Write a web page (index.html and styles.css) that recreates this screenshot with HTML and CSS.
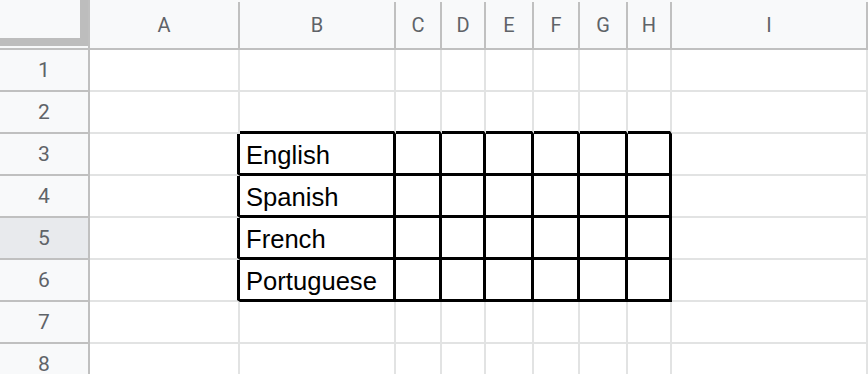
FILE: index.html
```html
<!DOCTYPE html>
<html lang="en">
<head>
    <meta charset="UTF-8">
    <title>Sheet</title>
    <link rel="stylesheet" href="styles.css">
</head>
<body>
    <div class="sheet">
        <!-- column headers -->
        <div class="corner"><div class="freeze-v"></div><div class="freeze-h"></div></div>
        <div class="col-head">A</div>
        <div class="col-head">B</div>
        <div class="col-head">C</div>
        <div class="col-head">D</div>
        <div class="col-head">E</div>
        <div class="col-head">F</div>
        <div class="col-head">G</div>
        <div class="col-head">H</div>
        <div class="col-head">I</div>

        <!-- row 1 -->
        <div class="row-head">1</div>
        <div class="cell"></div><div class="cell"></div><div class="cell"></div><div class="cell"></div><div class="cell"></div>
        <div class="cell"></div><div class="cell"></div><div class="cell"></div><div class="cell"></div>

        <!-- row 2 -->
        <div class="row-head">2</div>
        <div class="cell"></div>
        <div class="cell above"></div><div class="cell above"></div><div class="cell above"></div><div class="cell above"></div>
        <div class="cell above"></div><div class="cell above"></div><div class="cell above"></div>
        <div class="cell"></div>

        <!-- row 3 -->
        <div class="row-head">3</div>
        <div class="cell before"></div>
        <div class="cell boxed">English</div>
        <div class="cell boxed"></div><div class="cell boxed"></div><div class="cell boxed"></div>
        <div class="cell boxed"></div><div class="cell boxed"></div><div class="cell boxed"></div>
        <div class="cell"></div>

        <!-- row 4 -->
        <div class="row-head">4</div>
        <div class="cell before"></div>
        <div class="cell boxed">Spanish</div>
        <div class="cell boxed"></div><div class="cell boxed"></div><div class="cell boxed"></div>
        <div class="cell boxed"></div><div class="cell boxed"></div><div class="cell boxed"></div>
        <div class="cell"></div>

        <!-- row 5 -->
        <div class="row-head active">5</div>
        <div class="cell before"></div>
        <div class="cell boxed">French</div>
        <div class="cell boxed"></div><div class="cell boxed"></div><div class="cell boxed"></div>
        <div class="cell boxed"></div><div class="cell boxed"></div><div class="cell boxed"></div>
        <div class="cell"></div>

        <!-- row 6 -->
        <div class="row-head">6</div>
        <div class="cell before"></div>
        <div class="cell boxed">Portuguese</div>
        <div class="cell boxed"></div><div class="cell boxed"></div><div class="cell boxed"></div>
        <div class="cell boxed"></div><div class="cell boxed"></div><div class="cell boxed"></div>
        <div class="cell"></div>

        <!-- row 7 -->
        <div class="row-head">7</div>
        <div class="cell"></div><div class="cell"></div><div class="cell"></div><div class="cell"></div><div class="cell"></div>
        <div class="cell"></div><div class="cell"></div><div class="cell"></div><div class="cell"></div>

        <!-- row 8 -->
        <div class="row-head">8</div>
        <div class="cell"></div><div class="cell"></div><div class="cell"></div><div class="cell"></div><div class="cell"></div>
        <div class="cell"></div><div class="cell"></div><div class="cell"></div><div class="cell"></div>
    </div>
</body>
</html>
```

FILE: styles.css
```css
body {
    margin: 0;
    padding: 0;
    background: #fff;
    overflow: hidden;
}
.sheet {
    display: grid;
    grid-template-columns: 90px 150px 156px 46px 44px 48px 46px 48px 44px 1fr;
    grid-template-rows: 50px repeat(8, 42px);
    background: #f8f9fa;
}
.corner {
    position: relative;
    border-right: 2px solid #c0c0c0;
    border-bottom: 2px solid #c0c0c0;
    box-sizing: border-box;
}
.freeze-v {
    position: absolute;
    left: 80px;
    top: 0;
    width: 8px;
    height: 38px;
    background: #bdbdbd;
}
.freeze-h {
    position: absolute;
    left: 0;
    top: 38px;
    width: 88px;
    height: 8px;
    background: #bdbdbd;
}
.col-head {
    margin-top: 2px;
    border-right: 2px solid #c0c0c0;
    border-bottom: 2px solid #c0c0c0;
    box-sizing: border-box;
    display: flex;
    align-items: center;
    justify-content: center;
    font-family: Roboto, "Liberation Sans", sans-serif;
    font-size: 20px;
    color: #5f6368;
}
.col-head:last-child {
    border-right: none;
}
.row-head {
    background: #f8f9fa;
    border-right: 2px solid #c0c0c0;
    border-bottom: 2px solid #c0c0c0;
    box-sizing: border-box;
    display: flex;
    align-items: center;
    justify-content: center;
    font-family: Roboto, "Liberation Sans", sans-serif;
    font-size: 21px;
    color: #5f6368;
}
.row-head.active {
    background: #e8eaed;
}
.cell {
    background: #fff;
    border-right: 2px solid #e2e3e3;
    border-bottom: 2px solid #e2e3e3;
    box-sizing: border-box;
    display: flex;
    align-items: flex-end;
    padding: 0 0 4px 6px;
    font-family: "Liberation Sans", Arial, sans-serif;
    font-size: 25.6px;
    line-height: 28px;
    color: #000;
    white-space: nowrap;
}
.cell.above {
    border-bottom: 3px solid #000;
}
.cell.before {
    border-right: 3px solid #000;
}
.cell.boxed {
    border-right: 3px solid #000;
    border-bottom: 3px solid #000;
}
```
